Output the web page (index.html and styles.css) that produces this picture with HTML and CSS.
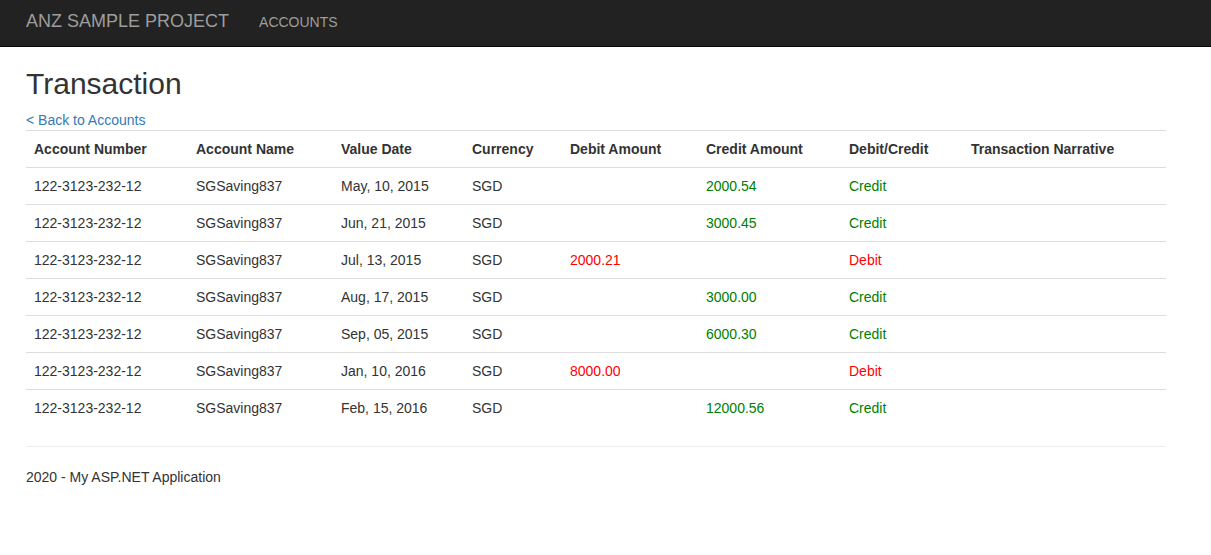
FILE: index.html
```html
<!DOCTYPE html>
<html lang="en">
<head>
<meta charset="utf-8">
<title>Transaction</title>
<link rel="stylesheet" href="styles.css">
</head>
<body>
<header class="navbar">
  <div class="wrap nav-inner">
    <a class="brand" href="#">ANZ SAMPLE PROJECT</a>
    <a class="nav-link" href="#">ACCOUNTS</a>
  </div>
</header>
<main class="wrap">
  <h2 class="title">Transaction</h2>
  <a class="back" href="#">&lt; Back to Accounts</a>
  <table class="table">
    <colgroup>
      <col class="c1"><col class="c2"><col class="c3"><col class="c4"><col class="c5"><col class="c6"><col class="c7"><col class="c8">
    </colgroup>
    <thead>
      <tr><th>Account Number</th><th>Account Name</th><th>Value Date</th><th>Currency</th><th>Debit Amount</th><th>Credit Amount</th><th>Debit/Credit</th><th>Transaction Narrative</th></tr>
    </thead>
    <tbody>
      <tr><td>122-3123-232-12</td><td>SGSaving837</td><td>May, 10, 2015</td><td>SGD</td><td></td><td class="cr">2000.54</td><td class="cr">Credit</td><td></td></tr>
      <tr><td>122-3123-232-12</td><td>SGSaving837</td><td>Jun, 21, 2015</td><td>SGD</td><td></td><td class="cr">3000.45</td><td class="cr">Credit</td><td></td></tr>
      <tr><td>122-3123-232-12</td><td>SGSaving837</td><td>Jul, 13, 2015</td><td>SGD</td><td class="db">2000.21</td><td></td><td class="db">Debit</td><td></td></tr>
      <tr><td>122-3123-232-12</td><td>SGSaving837</td><td>Aug, 17, 2015</td><td>SGD</td><td></td><td class="cr">3000.00</td><td class="cr">Credit</td><td></td></tr>
      <tr><td>122-3123-232-12</td><td>SGSaving837</td><td>Sep, 05, 2015</td><td>SGD</td><td></td><td class="cr">6000.30</td><td class="cr">Credit</td><td></td></tr>
      <tr><td>122-3123-232-12</td><td>SGSaving837</td><td>Jan, 10, 2016</td><td>SGD</td><td class="db">8000.00</td><td></td><td class="db">Debit</td><td></td></tr>
      <tr><td>122-3123-232-12</td><td>SGSaving837</td><td>Feb, 15, 2016</td><td>SGD</td><td></td><td class="cr">12000.56</td><td class="cr">Credit</td><td></td></tr>
    </tbody>
  </table>
  <hr class="rule">
  <footer class="footer">
    <p>2020 - My ASP.NET Application</p>
  </footer>
</main>
</body>
</html>
```

FILE: styles.css
```css
* { box-sizing: border-box; }
html, body { margin: 0; padding: 0; }
body {
  font-family: "Liberation Sans", Arial, Helvetica, sans-serif;
  font-size: 14px;
  line-height: 20px;
  color: #333;
  background: #fff;
}
.wrap {
  width: 1140px;
  margin-left: 26px;
}
.navbar {
  background: #222;
  border-bottom: 1px solid #080808;
  height: 47px;
}
.nav-inner {
  display: flex;
  align-items: center;
  height: 46px;
}
.brand {
  font-size: 18px;
  line-height: 20px;
  color: #9d9d9d;
  text-decoration: none;
  margin-top: -4px;
}
.nav-link {
  margin-left: 30px;
  font-size: 14px;
  color: #9d9d9d;
  text-decoration: none;
  margin-top: -3px;
}
.title {
  font-size: 30px;
  font-weight: 500;
  line-height: 33px;
  margin: 20px 0 10px;
  color: #333;
}
.back {
  display: block;
  color: #337ab7;
  text-decoration: none;
  line-height: 20px;
}
.table {
  width: 100%;
  border-collapse: collapse;
  table-layout: fixed;
  margin-bottom: 20px;
}
.c1 { width: 162px; }
.c2 { width: 145px; }
.c3 { width: 131px; }
.c4 { width: 98px; }
.c5 { width: 136px; }
.c6 { width: 143px; }
.c7 { width: 122px; }
.c8 { width: 203px; }
.table th, .table td {
  padding: 8px;
  text-align: left;
  border-top: 1px solid #ddd;
  line-height: 20px;
  vertical-align: top;
}
.table th { font-weight: bold; }
.cr { color: #008000; }
.db { color: #ff0000; }
.rule {
  border: 0;
  border-top: 1px solid #eee;
  margin: 0 0 20px;
}
.footer p { margin: 0; }
```
